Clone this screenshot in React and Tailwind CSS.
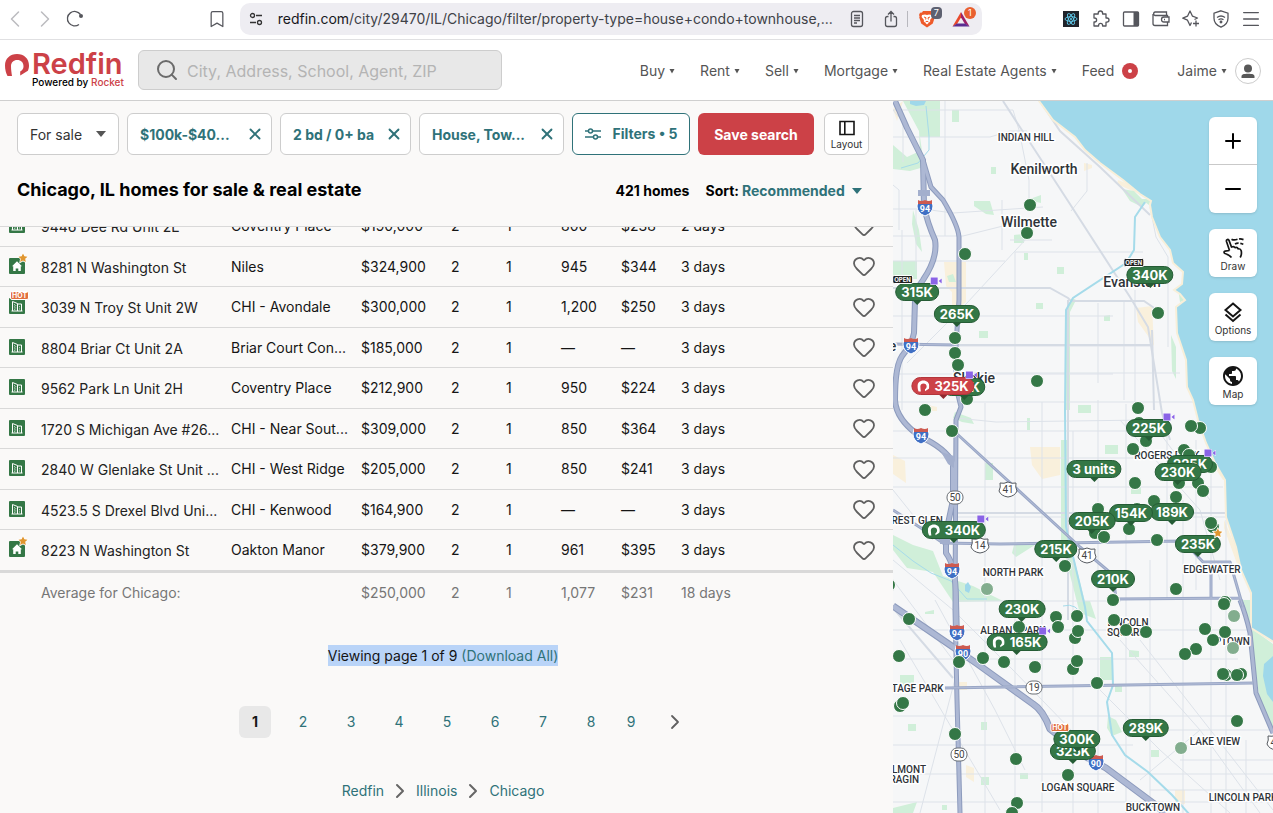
import React from "react";
import {
  ChevronLeft, ChevronRight, Bookmark, Search, X, Heart, Plus, Minus, Menu,
} from "lucide-react";

const ROWS = [
  { kind: "condo", address: "9446 Dee Rd Unit 2E", area: "Coventry Place", price: "$190,000", beds: "2", baths: "1", sqft: "800", rate: "$238", days: "2 days" },
  { kind: "house", badge: "star", address: "8281 N Washington St", area: "Niles", price: "$324,900", beds: "2", baths: "1", sqft: "945", rate: "$344", days: "3 days" },
  { kind: "condo", badge: "hot", address: "3039 N Troy St Unit 2W", area: "CHI - Avondale", price: "$300,000", beds: "2", baths: "1", sqft: "1,200", rate: "$250", days: "3 days" },
  { kind: "condo", address: "8804 Briar Ct Unit 2A", area: "Briar Court Con...", price: "$185,000", beds: "2", baths: "1", sqft: "—", rate: "—", days: "3 days" },
  { kind: "condo", address: "9562 Park Ln Unit 2H", area: "Coventry Place", price: "$212,900", beds: "2", baths: "1", sqft: "950", rate: "$224", days: "3 days" },
  { kind: "condo", address: "1720 S Michigan Ave #26...", area: "CHI - Near Sout...", price: "$309,000", beds: "2", baths: "1", sqft: "850", rate: "$364", days: "3 days" },
  { kind: "condo", address: "2840 W Glenlake St Unit ...", area: "CHI - West Ridge", price: "$205,000", beds: "2", baths: "1", sqft: "850", rate: "$241", days: "3 days" },
  { kind: "condo", address: "4523.5 S Drexel Blvd Uni...", area: "CHI - Kenwood", price: "$164,900", beds: "2", baths: "1", sqft: "—", rate: "—", days: "3 days" },
  { kind: "house", badge: "star", address: "8223 N Washington St", area: "Oakton Manor", price: "$379,900", beds: "2", baths: "1", sqft: "961", rate: "$395", days: "3 days" },
];

/* Map canvas coordinates: x runs 893–1273, y runs 101–813. */
const ORIGIN_X = 893;
const ORIGIN_Y = 101;

const DOTS = [
  [1030, 205], [1027, 233], [965, 254], [1158, 313], [955, 338], [955, 353], [958, 365], [1037, 381],
  [967, 399], [1138, 408], [925, 410], [952, 431], [1200, 428], [1191, 426], [1139, 423], [1146, 441],
  [1133, 449], [1184, 450], [1189, 455], [1211, 467], [1135, 483], [1179, 483], [1198, 483], [1203, 491],
  [1176, 497], [1154, 501], [1098, 509], [1137, 509], [1129, 529], [1095, 533], [1104, 537], [1157, 540],
  [1213, 527], [1211, 523], [1065, 566], [1176, 589], [889, 585], [1113, 600], [1225, 602], [1224, 604],
  [909, 619], [1056, 617], [1077, 616], [1019, 627], [1058, 627], [1075, 638], [1078, 631], [1114, 620],
  [1126, 630], [1146, 632], [1205, 629], [1225, 632], [1213, 640], [1196, 649], [1185, 654], [899, 656],
  [983, 658], [959, 662], [1004, 662], [1035, 667], [1073, 669], [1077, 661], [1097, 683], [1226, 675],
  [1223, 674], [1241, 674], [1237, 675], [900, 706], [903, 703], [955, 734], [1237, 721], [1016, 759],
  [1068, 775], [1017, 803], [1012, 813],
];
const SEEN_DOTS = [[987, 589], [1234, 616], [1233, 648], [1181, 748]];

const PINS = [
  { x: 1150, y: 275, label: "340K", tag: "open" },
  { x: 917, y: 292, label: "315K", tag: "open-video" },
  { x: 957, y: 314, label: "265K" },
  { x: 964, y: 387, label: "215K" },
  { x: 943, y: 386, label: "325K", logo: true, red: true, tag: "video" },
  { x: 1149, y: 428, label: "225K", tag: "video" },
  { x: 1094, y: 469, label: "3 units" },
  { x: 1190, y: 464, label: "225K", tag: "video" },
  { x: 1178, y: 472, label: "230K" },
  { x: 1172, y: 512, label: "189K" },
  { x: 1131, y: 513, label: "154K" },
  { x: 1092, y: 521, label: "205K" },
  { x: 1198, y: 544, label: "235K", tag: "star" },
  { x: 1056, y: 549, label: "215K" },
  { x: 954, y: 530, label: "340K", logo: true, tag: "video" },
  { x: 1113, y: 579, label: "210K" },
  { x: 1022, y: 609, label: "230K" },
  { x: 1017, y: 642, label: "165K", logo: true, tag: "video" },
  { x: 1146, y: 728, label: "289K" },
  { x: 1073, y: 751, label: "325K" },
  { x: 1077, y: 739, label: "300K", tag: "hot" },
];

const TOWNS = [
  [1044, 174, "Kenilworth"], [1029, 227, "Wilmette"], [1132, 287, "Evanston"], [974, 383, "Skokie"], [873, 351, "Glenvie"],
];
const AREAS = [
  [1026, 141, "INDIAN HILL"], [1167, 459, "ROGERS PARK"], [1013, 576, "NORTH PARK"], [911, 524, "FOREST GLEN"],
  [1212, 573, "EDGEWATER"], [1013, 634, "ALBANY PARK"], [1128, 626, "LINCOLN"], [1126, 636, "SQUARE"],
  [1229, 645, "UPTOWN"], [908, 692, "PORTAGE PARK"], [1215, 745, "LAKE VIEW"], [1078, 791, "LOGAN SQUARE"],
  [1153, 811, "BUCKTOWN"], [1243, 801, "LINCOLN PARK"], [903, 773, "BELMONT"], [901, 783, "CRAGIN"],
];
const INTERSTATES = [[925, 208, "94"], [911, 346, "94"], [921, 436, "94"], [952, 571, "94"], [957, 633, "94"], [963, 653, "90"], [1096, 763, "90"]];
const US_ROUTES = [[1008, 489, "41"], [1087, 555, "41"], [980, 545, "14"], [1276, 742, "41"]];
const STATE_ROUTES = [[955, 497, "50"], [959, 754, "50"], [1034, 687, "19"]];

const GREENS = [
  "M903 101h27v36h-10l2 14 2 16-14 4-17-2v-24l14 12 13-6-1-20z",
  "M930 101h10v36h-18v-36zM952 110h7v12h-7zM991 167h5v7h-5zM947 276l6-2 3 8h-7zM974 201h16l4 14-8-1-12-8z",
  "M893 261h24v18h-24zM913 210l6 20 3 22-6-8-4-20zM1014 235l10-1v9h-10zM1057 267h7v7h-7zM1024 253h4v7h-4z",
  "M979 331h9v7h-9zM1036 303h7v6h-7zM1104 316l6-1v6h-6zM1027 200l14-5v8z",
  "M1066 310l6-12 4 2-6 12v98h-4zM1122 189l12 2 12 12-4 4-12-6z",
  "M955 412l16 6 3 6-12-2-9-4zM1027 418h3v12h-3zM1078 405h13v8h-13zM1105 445h13v9h-13zM985 463h8v17h-8zM1061 440h8l-2 90 20 80h-8l-18-70z",
  "M893 535l20 10 20 6 10 25 30 10 30 15-50 1-20-30-26-4-14-18zM1131 485h10v9h-10zM1014 545l24-2-22 14-4-4z",
  "M900 675h14v12h-14zM1100 657h12v23h-12zM1129 650l10 1v6h-10zM1108 716l8 4 6 12-10 4-5-8zM1115 685h7v7h-7zM981 722h6v8h-6zM1151 750h8v7h-8zM981 777h8v8h-8zM1020 773h8v6h-8zM908 724h8v7h-8zM942 805h5v5h-5z",
  "M1240 600h11v28l22 16v90l-12-28-6-36-4-34z",
  "M1078 601h12l6 18-16-6zM893 808l24-6-4 11h-20zM925 612l9-2v4h-9z",
  "M1149 205l-8-6 10 0zM1171 335l5 12v32l-4-8zM1178 288l8 0 0 12-6 2z",
];
const SANDS = [
  "M944 262h22v40l-14 12v-22l-6-6zM1030 447l30 0v28l-18 4-10-14zM1136 308l16-2 2 40-6-10-10-14z",
  "M1084 163l8 2 0 3-8 3zM1118 180l16 6 17 15-14-8-20-9zM903 101l-10 8 4 12zM893 455l12 6 1 22-13-9zM958 682h9v8h-9zM966 765l8 3v14l-8-5zM1175 790h10v14h-10zM928 405l9 2v4h-8z",
  "M1200 420l10 24 12 28 5 8-4 0-8-12zM1224 520l12 28 8 24-4 0-16-44z",
];
const MINOR_ROADS = [
  "M893 137h97l20-6h17M893 209h30l30 4 90-6M893 236h70l40-10M893 261h112M893 316h220M956 346h196M893 374h220",
  "M970 373h210M893 402h300M956 418l40 4 150-2M893 431h270M893 458h300M893 487h330M956 517h270M956 601h165M893 630h360M893 659h345M893 716h340M893 745h240M893 774h380M893 802h380M1130 730h143M1180 760h93M1150 790h123",
  "M945 101v135M916 210v60M902 230v180M1002 200v50M1098 303v80M1124 300v100M1135 290v120M1015 252v560M1042 402v410M985 403v410M1073 431v382M1098 400v413M1126 404v409M1150 560v253M1167 430v170M1183 500v313M1196 440v150M1211 470v343M1226 520v293M1246 740v73",
  "M893 110h120l6 20 10 50v25M1052 240l-42 0M1027 238l-60 65-60 60M1015 252h128",
  "M1087 163v28l-16 20M893 185l6 5v40M893 110l10 12v40M1150 207l6 30 12 20v90",
  "M893 560l60 50 60 60 90 93 60 50M893 580l60 80M935 600l60 110 30 60M1120 640l80 90 60 83M1100 690l60 60 70 63M1140 640l133 170M1120 420l80 90 20 70M1150 420l60 80M893 490l40 50M960 660l-40 153M1140 780l60-50M900 640l100 170",
];
const WIDE_ROADS = [
  "M1003 101l65 100 62 96 18 30 14 86 8 27M893 288h157l18 10 3 3h73l16 11",
  "M1068 300v320M893 608l60 70M1152 330l2 80M1040 101l20 30 40 36 50 48",
  "M1226 513h-270M956 345h196",
];
const ARTERIAL_ROADS = "M893 344L956 345M956 433L1080 547 1113 575 1116 599 1240 598M893 510L921 528 943 543 1000 544 1183 541 1203 562 1230 562 1243 607M1211 562V598M945 688L1253 683";

function Interstate({ x, y, label }) {
  return (
    <g>
      <path d={`M${x - 7} ${y - 7}q3 2 7 0q4 2 7 0l1 5q0 7-8 10q-8-3-8-10z`} fill="#3f6fc4" stroke="#fff" strokeWidth="1" />
      <path d={`M${x - 7} ${y - 8}q3 2 7 0q4 2 7 0v4h-14z`} fill="#cd5a50" />
      <text x={x} y={y + 4} textAnchor="middle" fontSize="9" fontWeight="700" fill="#fff">{label}</text>
    </g>
  );
}

function MapArtwork() {
  return (
    <svg className="block h-[712px] w-[380px]" viewBox="893 101 380 712" fontFamily="Roboto, sans-serif" role="img" aria-label="Map of Chicago's north side">
      <rect x="893" y="101" width="380" height="712" fill="#f6f7f8" />
      {SANDS.map((d) => <path key={d} d={d} fill="#f9f0dc" />)}
      {GREENS.map((d) => <path key={d} d={d} fill="#d0efd9" />)}
      {MINOR_ROADS.map((d) => <path key={d} d={d} fill="none" stroke="#dde2e9" strokeWidth="1" />)}
      {WIDE_ROADS.map((d) => <path key={d} d={d} fill="none" stroke="#d5dbe4" strokeWidth="2" />)}
      <path d="M1039 95L1039 101 1053 120 1075 137 1085 150 1100 163 1123 180 1140 194 1151 201 1150 205 1152 217 1160 237 1170 250 1173 263 1183 272 1182 284 1174 290 1180 294 1185 300 1176 307 1177 333 1186 360 1187 387 1193 400 1198 420 1206 443 1215 463 1225 480 1226 517 1236 547 1241 570 1251 593 1251 628 1280 646V95z" fill="#9fd8ea" stroke="#f8efd9" strokeWidth="2" />
      <path d="M1264 664l9-8v46l-6-8-4-18zM910 101h16l-2 4-8 1-6-2zM968 582l3 5-2 6-4-2v-6z" fill="#9fd8ea" />
      <path d="M1145 202l-10 15-1 33-8 13-53 35-7 12-1 100 1 117 19 80 2 14 25 32 1 32-6 17 5 33 13 20 23 17 24 23 18 20" fill="none" stroke="#a5dbea" strokeWidth="2" />
      <path d="M926 106l3 30 0 14-11 13-17 5M893 545l20 16 18 12 20 8 16 18 20 0M1063 606q14-4 20 12" fill="none" stroke="#a5dbea" strokeWidth="1" />
      <g fill="none" strokeLinejoin="round">
        <g stroke="#8d9bbd" strokeWidth="6">
          <path d="M895 101L907 128 923 160 924 206Q927 222 935 240Q938 258 923 280Q915 290 915 300L914 333Q912 344 902 356Q895 366 895 400Q896 420 921 437Q945 448 953 463L953 500 946 533 946 553Q956 566 956 600L957 640" />
          <path d="M923 160L931 187 943 200Q958 225 959 237L959 300 956 345 956 387 961 407 956 420 955 610 957 700 960 813" strokeWidth="5" />
          <path d="M893 606L953 647 976 663 1033 704Q1043 710 1050 729L1086 757 1106 768 1153 803 1165 813" strokeWidth="7" />
          <path d="M1240 600Q1246 615 1250 633L1256 693 1273 733" strokeWidth="5" />
        </g>
        <g stroke="#adb8d4" strokeWidth="4">
          <path d="M895 101L907 128 923 160 924 206Q927 222 935 240Q938 258 923 280Q915 290 915 300L914 333Q912 344 902 356Q895 366 895 400Q896 420 921 437Q945 448 953 463L953 500 946 533 946 553Q956 566 956 600L957 640" />
          <path d="M923 160L931 187 943 200Q958 225 959 237L959 300 956 345 956 387 961 407 956 420 955 610 957 700 960 813" strokeWidth="3" />
          <path d="M893 606L953 647 976 663 1033 704Q1043 710 1050 729L1086 757 1106 768 1153 803 1165 813" strokeWidth="5" />
          <path d="M1240 600Q1246 615 1250 633L1256 693 1273 733" strokeWidth="3" />
        </g>
        <path d={ARTERIAL_ROADS} stroke="#9aa7c6" strokeWidth="3" />
        <path d={ARTERIAL_ROADS} stroke="#b3bdd7" strokeWidth="1" />
      </g>
      <path d="M918 190h12v6h-12zM941 452l13 4v12l-6-4zM940 538l10-2v8h-10z" fill="#a3afcd" />
      {US_ROUTES.map(([x, y, label]) => (
        <g key={`${x}-${y}`}>
          <path d={`M${x - 8} ${y - 6}q4 1 8-1q4 2 8 1q-1 4 1 8q-2 5-9 6q-7-1-9-6q2-4 1-8z`} fill="#fff" stroke="#555a60" strokeWidth="1" />
          <text x={x} y={y + 4} textAnchor="middle" fontSize="10" fill="#444">{label}</text>
        </g>
      ))}
      {STATE_ROUTES.map(([x, y, label]) => (
        <g key={`${x}-${y}`}>
          <rect x={x - 8} y={y - 6} width="16" height="13" rx="6" fill="#fff" stroke="#6b7076" strokeWidth="1" />
          <text x={x} y={y + 4} textAnchor="middle" fontSize="10" fill="#444">{label}</text>
        </g>
      ))}
      {INTERSTATES.map(([x, y, label]) => <Interstate key={`${x}-${y}`} x={x} y={y} label={label} />)}
      <g textAnchor="middle" fill="#2f3338" stroke="#fff" strokeWidth="3" paintOrder="stroke" strokeLinejoin="round" fontWeight="500">
        {TOWNS.map(([x, y, label]) => <text key={label} x={x} y={y} fontSize="14">{label}</text>)}
        {AREAS.map(([x, y, label]) => <text key={label} x={x} y={y} fontSize="10">{label}</text>)}
      </g>
    </svg>
  );
}

function RedfinMark({ className }) {
  return (
    <svg className={className} viewBox="0 0 24 24" fill="currentColor" aria-hidden="true">
      <path d="M7 23H2.500C1 20 0 16.500 0 12.500 0 5.500 5 1 12 1s12 4.500 12 11.500c0 2-.4 3.800-1.100 5.200L15.200 22.500v-4c2.300-1.200 3.300-3 3.300-5.300C18.500 9.500 16 7 12.300 7 8.500 7 6 9.500 6 13.200c0 3.600.6 6.800 1 9.800z" />
    </svg>
  );
}

function StarBadge() {
  return (
    <svg className="size-3" viewBox="0 0 12 12" aria-hidden="true">
      <path d="M6 1.500l1.400 2.800 3.100.4-2.300 2.100.6 3.200L6 8.500l-2.800 1.500.6-3.200L1.500 4.700l3.100-.4z" fill="#e0962f" stroke="#fff" strokeWidth="1.500" paintOrder="stroke" />
    </svg>
  );
}

function VideoBadge() {
  return (
    <svg className="h-2 w-3" viewBox="0 0 12 8" aria-hidden="true">
      <path d="M.5.500h7v7h-7zM8.500 4L11.500 1.500v5z" fill="#8a63e6" stroke="#fff" strokeWidth="1" paintOrder="stroke" />
    </svg>
  );
}

function HotBadge() {
  return <span className="block rounded-xs border border-white bg-[#e2703f] px-px text-[7px] leading-[7px] font-bold text-white">HOT</span>;
}

function OpenBadge() {
  return <span className="block rounded-xs border border-white bg-[#222] px-px text-[6px] leading-[7px] font-bold text-white">OPEN</span>;
}

function Pin({ pin }) {
  const tone = pin.red ? "border-[#b3353b] bg-[#cc4147]" : "border-[#255c35] bg-[#347746]";
  return (
    <button
      type="button"
      className="absolute -translate-x-1/2 -translate-y-1/2"
      style={{ left: pin.x - ORIGIN_X, top: pin.y - ORIGIN_Y }}
    >
      <span className={`relative z-10 flex h-[18px] items-center gap-1 rounded-full border px-[5px] text-[13px] leading-4 font-bold whitespace-nowrap text-white ${tone}`}>
        {pin.logo && <RedfinMark className="mr-px size-3" />}
        {pin.label}
      </span>
      <svg className="absolute top-full left-1/2 -mt-px h-[5px] w-[10px] -translate-x-1/2" viewBox="0 0 10 5" aria-hidden="true">
        <path d="M0 0h10L5 5z" fill={pin.red ? "#8f2a30" : "#255c35"} />
      </svg>
      {(pin.tag === "open" || pin.tag === "open-video") && <span className="absolute -top-2 -left-[3px] z-20"><OpenBadge /></span>}
      {(pin.tag === "video" || pin.tag === "open-video") && <span className="absolute -top-[6px] -right-[3px] z-20 flex"><VideoBadge /></span>}
      {pin.tag === "hot" && <span className="absolute -top-[7px] -left-[3px] z-20"><HotBadge /></span>}
      {pin.tag === "star" && <span className="absolute -top-2 -right-[3px] z-20"><StarBadge /></span>}
    </button>
  );
}

function MapControl({ label, children }) {
  return (
    <button type="button" className="flex size-12 flex-col items-center justify-center rounded-md bg-white pt-px text-[#151515] shadow-sm">
      {children}
      <span className="text-[10px] leading-3 text-[#333]">{label}</span>
    </button>
  );
}

function MapPane() {
  return (
    <section aria-label="Map" className="relative w-[380px] shrink-0 overflow-hidden bg-[#f6f7f8]">
      <MapArtwork />
      {DOTS.map(([x, y]) => (
        <span key={`${x}-${y}`} className="absolute size-[14px] -translate-x-1/2 -translate-y-1/2 rounded-full border border-white bg-[#347746]" style={{ left: x - ORIGIN_X, top: y - ORIGIN_Y }} />
      ))}
      {SEEN_DOTS.map(([x, y]) => (
        <span key={`${x}-${y}`} className="absolute size-[14px] -translate-x-1/2 -translate-y-1/2 rounded-full border border-white bg-[#82ad8e]" style={{ left: x - ORIGIN_X, top: y - ORIGIN_Y }} />
      ))}
      {PINS.map((pin) => <Pin key={`${pin.x}-${pin.y}`} pin={pin} />)}
      <div className="absolute top-4 right-4 z-30 flex flex-col gap-4">
        <div className="flex flex-col overflow-hidden rounded-md bg-white shadow-sm">
          <button type="button" aria-label="Zoom in" className="flex size-12 items-center justify-center border-b border-[#c9c9c9]"><Plus size={24} /></button>
          <button type="button" aria-label="Zoom out" className="flex size-12 items-center justify-center"><Minus size={24} /></button>
        </div>
        <MapControl label="Draw">
          <svg className="size-6" viewBox="0 0 24 24" fill="none" stroke="currentColor" strokeWidth="1.700" strokeLinejoin="round" aria-hidden="true">
            <path d="M8.500 14.500L5.500 5.500c-.6-2 1.900-2.800 2.600-.9L10.500 11c1.500-.7 3-.3 3.500.7 1.400-.5 2.700 0 3.200 1.100 1.500-.2 2.600.5 3 2 .6 2.600.2 4.600-1 6.700M8.500 14.500l-4.500.6c-1.400.3-1.200 1.900 0 2.400C7 18.500 9 19.500 10.500 21.500" />
            <path d="M10.500 3.200c2 1.200 4 .8 6 .1M18 3c1.800-.2 3.200.1 4.500.6M14 8c1.200-.7 2.400-1 3.600-.9M19.300 7.300c1.200.2 2.200.6 3 1.100" />
          </svg>
        </MapControl>
        <MapControl label="Options">
          <svg className="size-6" viewBox="0 0 24 24" fill="none" stroke="currentColor" strokeWidth="2" aria-hidden="true">
            <path d="M12 3.500l7.500 6.500-7.500 6.500L4.500 10zM4.500 14.500l7.500 6.500 7.500-6.500" />
          </svg>
        </MapControl>
        <MapControl label="Map">
          <svg className="size-6" viewBox="0 0 24 24" fill="currentColor" aria-hidden="true">
            <path d="M12 2C6.480 2 2 6.480 2 12s4.480 10 10 10 10-4.480 10-10S17.520 2 12 2zm-1 17.930c-3.950-.49-7-3.850-7-7.930 0-.62.080-1.210.210-1.790L9 15v1c0 1.100.9 2 2 2v1.930zm6.900-2.540c-.26-.81-1-1.390-1.900-1.390h-1v-3c0-.55-.45-1-1-1H8v-2h2c.55 0 1-.45 1-1V7h2c1.100 0 2-.9 2-2v-.41c2.930 1.190 5 4.060 5 7.410 0 2.080-.8 3.970-2.100 5.390z" />
          </svg>
        </MapControl>
      </div>
    </section>
  );
}

function BrowserBar() {
  return (
    <div className="flex h-10 shrink-0 items-center border-b border-[#e0e0e2] bg-white pr-[7px] pb-px pl-1 text-[#55565c]">
      <button type="button" aria-label="Back" className="flex w-[22px] justify-center text-[#bcbcc0]"><ChevronLeft size={28} strokeWidth={1.300} className="shrink-0" /></button>
      <button type="button" aria-label="Forward" className="ml-2 flex w-[22px] justify-center text-[#bcbcc0]"><ChevronRight size={28} strokeWidth={1.300} className="shrink-0" /></button>
      <button type="button" aria-label="Reload" className="ml-2 flex w-[22px] justify-center">
        <svg className="size-5" viewBox="0 0 20 20" fill="none" stroke="currentColor" strokeWidth="1.300" aria-hidden="true">
          <path d="M14 15.400A7.200 7.200 0 1 1 15.500 5.500" />
          <circle cx="16" cy="7" r="2" fill="currentColor" stroke="none" />
        </svg>
      </button>
      <div className="flex-8" />
      <button type="button" aria-label="Bookmark" className="flex w-6 justify-center"><Bookmark size={20} strokeWidth={1.500} /></button>
      <div className="ml-[11px] flex h-8 min-w-0 basis-[742px] items-center rounded-[10px] bg-[#eeedf2] px-2">
        <svg className="mx-px size-[14px] shrink-0 text-[#333]" viewBox="0 0 14 14" fill="none" stroke="currentColor" strokeWidth="1.300" aria-hidden="true">
          <circle cx="3.500" cy="3.500" r="2" /><path d="M7 3.500h6M1 10.500h6" /><circle cx="10.500" cy="10.500" r="2" />
        </svg>
        <span className="ml-[14px] min-w-0 flex-1 truncate text-sm leading-5 text-[#404248]"><span className="text-[#17181c]">redfin.com</span>/city/29470/IL/Chicago/filter/property-type=house+condo+townhouse,...</span>
        <button type="button" aria-label="Reader view" className="flex w-6 justify-center">
          <svg className="size-[18px]" viewBox="0 0 18 18" fill="none" stroke="currentColor" strokeWidth="1.300" aria-hidden="true">
            <rect x="3.500" y="1.500" width="11" height="15" rx="2" /><path d="M6 5.500h6M6 8h6M6 10.500h6M6 13h3" />
          </svg>
        </button>
        <button type="button" aria-label="Share" className="ml-[10px] flex w-6 justify-center">
          <svg className="size-[18px]" viewBox="0 0 18 18" fill="none" stroke="currentColor" strokeWidth="1.300" aria-hidden="true">
            <path d="M6.500 6.500h-1a2 2 0 0 0-2 2v6a2 2 0 0 0 2 2h7a2 2 0 0 0 2-2v-6a2 2 0 0 0-2-2h-1M9 11.500V2M6 4.500l3-3 3 3" />
          </svg>
        </button>
        <span className="mx-1 h-4 w-px bg-[#b8b8be]" />
        <button type="button" aria-label="Brave Shields" className="relative ml-[3px] flex w-6 justify-center">
          <svg className="size-[18px]" viewBox="0 0 18 18" aria-hidden="true">
            <path d="M5 1h8l1 1.500 2 .3 1 2.200-.6 1.200.4 1-2 6.300L9 17.500l-5.800-4L1.200 7.200l.4-1L1 5l1-2.200 2-.3z" fill="#ee5a2a" />
            <path d="M4 5l3-.6 2 .6 2-.6L14 5l.4 2-2.400 3 .3 1.300L9 14.500l-3.300-3.200L6 10 3.600 7z" fill="#fff" />
            <path d="M6 7l2 .8-.4 1.700M12 7l-2 .8.400 1.700M7.500 12L9 11.200l1.500.8" stroke="#ee5a2a" fill="none" />
          </svg>
          <span className="absolute -top-[3px] -right-[3px] rounded bg-[#5d6070] px-[3px] text-[9px] leading-3 text-white">7</span>
        </button>
        <button type="button" aria-label="Brave Rewards" className="relative mr-px ml-[10px] flex w-6 justify-center">
          <svg className="size-[18px]" viewBox="0 0 18 18" aria-hidden="true">
            <path d="M9 2L.5 16.500 5 14l4-6.500z" fill="#e8492c" /><path d="M9 2l8.500 14.500L13 14 9 7.500z" fill="#9c2068" /><path d="M.5 16.500h17L13 13.500H5z" fill="#5a2d91" />
          </svg>
          <span className="absolute -top-[3px] -right-[3px] rounded-full bg-[#e9602f] px-1 text-[9px] leading-3 text-white">1</span>
        </button>
      </div>
      <div className="flex-5" />
      <div className="flex items-center">
        <button type="button" aria-label="React Developer Tools" className="flex w-[30px] justify-center">
          <svg className="size-4" viewBox="0 0 16 16" fill="none" stroke="#62d0f2" aria-hidden="true">
            <rect width="16" height="16" fill="#20232a" stroke="none" />
            <g strokeWidth=".9"><ellipse cx="8" cy="8" rx="6" ry="2.300" /><ellipse cx="8" cy="8" rx="6" ry="2.300" transform="rotate(60 8 8)" /><ellipse cx="8" cy="8" rx="6" ry="2.300" transform="rotate(120 8 8)" /></g>
            <circle cx="8" cy="8" r="1" fill="#62d0f2" stroke="none" />
          </svg>
        </button>
        <button type="button" aria-label="Extensions" className="flex w-[30px] justify-center">
          <svg className="size-[18px]" viewBox="0 0 18 18" fill="none" stroke="currentColor" strokeWidth="1.300" strokeLinejoin="round" aria-hidden="true">
            <path d="M2 4h4.200V3.200a2.200 2.200 0 0 1 4.400 0V4H14v4h.9a2.100 2.100 0 0 1 0 4.200H14V16h-3.400v-.6a2 2 0 0 0-4 0v.6H2v-4h.6a2 2 0 0 0 0-4H2z" />
          </svg>
        </button>
        <button type="button" aria-label="Sidebar" className="flex w-[30px] justify-center">
          <svg className="h-4 w-[18px]" viewBox="0 0 18 16" aria-hidden="true"><rect x="1.500" y="1" width="15" height="14" rx="1" fill="none" stroke="currentColor" strokeWidth="1.300" /><path d="M11.500 1h5v14h-5z" fill="currentColor" /></svg>
        </button>
        <button type="button" aria-label="Wallet" className="flex w-[30px] justify-center">
          <svg className="h-4 w-[18px]" viewBox="0 0 18 16" fill="none" stroke="currentColor" strokeWidth="1.300" aria-hidden="true">
            <path d="M15.500 6V4.500H3A1.800 1.800 0 0 1 3 1h11.500v3.500M1 3v9.500a2 2 0 0 0 2 2h12.500V11" /><path d="M17 6h-5a2.500 2.500 0 0 0 0 5h5zM12 8.500h1" />
          </svg>
        </button>
        <button type="button" aria-label="Leo AI" className="flex w-[30px] justify-center">
          <svg className="size-[18px]" viewBox="0 0 18 18" fill="none" stroke="currentColor" strokeWidth="1.300" strokeLinejoin="round" aria-hidden="true">
            <path d="M12.500 9.500L15.500 8 10.500 6.200 8 1 5.500 6.200.8 8.200l4.700 2L8 15.500l1.500-3M14 10.500v6M11 13.500h6" />
          </svg>
        </button>
        <button type="button" aria-label="VPN" className="flex w-[30px] justify-center">
          <svg className="size-[18px]" viewBox="0 0 18 18" fill="none" stroke="currentColor" strokeWidth="1.300" aria-hidden="true">
            <path d="M9 .8l7 2.400v5c0 4.500-3 7.300-7 9-4-1.700-7-4.500-7-9v-5z" /><path d="M5 7.500q4-3 8 0M6.500 9.800q2.500-1.800 5 0" /><circle cx="9" cy="12" r=".8" fill="currentColor" />
          </svg>
        </button>
        <button type="button" aria-label="Menu" className="flex w-[30px] justify-center"><Menu size={22} strokeWidth={1.500} className="shrink-0" /></button>
      </div>
    </div>
  );
}

function NavMenu({ children }) {
  return (
    <button type="button" className="flex items-center gap-1 whitespace-nowrap">
      {children}
      <svg className="size-[6px]" viewBox="0 0 6 6" aria-hidden="true"><path d="M.5 1h5L3 5.500z" fill="#555" /></svg>
    </button>
  );
}

function SiteHeader() {
  return (
    <header className="flex h-[61px] shrink-0 items-center border-b border-[#cfcfcf] bg-white pr-3 pl-[5px]">
      <a href="#home" aria-label="Redfin" className="flex w-[118px] items-start">
        <RedfinMark className="mt-px size-6 shrink-0 text-[#cc4147]" />
        <span className="ml-[3px] flex flex-col">
          <span className="text-[29px] leading-6 font-semibold text-[#cc4147]">Redfin</span>
          <span className="text-[10px] leading-3 font-medium whitespace-nowrap text-black">Powered by <span className="text-[#cc4147]">Rocket</span></span>
        </span>
      </a>
      <label className="ml-[15px] flex h-10 min-w-0 basis-[364px] items-center gap-2 rounded-md border border-[#cdcdcd] bg-[#e8e8e8] px-4">
        <Search size={24} strokeWidth={2} className="shrink-0 text-[#6b6b6b]" />
        <span className="sr-only">Search</span>
        <input type="text" placeholder="City, Address, School, Agent, ZIP" className="min-w-0 flex-1 bg-transparent pt-0.5 text-base outline-none placeholder:text-[#b4b4b4]" />
      </label>
      <nav className="ml-auto flex items-center gap-[25px] pt-0.5 text-sm text-[#555]">
        <NavMenu>Buy</NavMenu>
        <NavMenu>Rent</NavMenu>
        <NavMenu>Sell</NavMenu>
        <NavMenu>Mortgage</NavMenu>
        <NavMenu>Real Estate Agents</NavMenu>
        <a href="#feed" className="flex items-center gap-2">Feed
          <span className="flex size-4 items-center justify-center rounded-full bg-[#cc4147]"><span className="size-1 rounded-full bg-white" /></span>
        </a>
        <div className="ml-[14px] flex items-center gap-2">
          <NavMenu>Jaime</NavMenu>
          <span className="flex size-[26px] items-center justify-center rounded-full border border-[#ccc]">
            <svg className="size-4" viewBox="0 0 16 16" fill="#585858" aria-hidden="true"><circle cx="8" cy="5.500" r="4" /><path d="M1.500 15v-1.500c0-2 2-2.700 6.500-2.700s6.500.7 6.500 2.700V15z" /></svg>
          </span>
        </div>
      </nav>
    </header>
  );
}

function FilterChip({ width, children }) {
  return (
    <button type="button" className={`flex h-[42px] shrink-0 items-center justify-between rounded-md border border-[#cdcdcd] bg-white pr-[7px] pl-3 text-sm font-bold whitespace-nowrap text-[#2f7279] ${width}`}>
      <span className="pt-0.5">{children}</span>
      <X size={18} strokeWidth={2.500} className="shrink-0" />
    </button>
  );
}

function Filters() {
  return (
    <div className="flex items-center gap-2">
      <label className="relative flex h-[42px] w-[102px] items-center rounded-md border border-[#cdcdcd] bg-white">
        <span className="sr-only">Listing type</span>
        <select className="h-full w-full appearance-none bg-transparent pt-0.5 pl-3 text-sm text-[#333] outline-none"><option>For sale</option></select>
        <svg className="pointer-events-none absolute right-3 h-[6px] w-[10px]" viewBox="0 0 10 6" aria-hidden="true"><path d="M0 0h10L5 6z" fill="#555" /></svg>
      </label>
      <FilterChip width="w-[145px]">$100k-$40...</FilterChip>
      <FilterChip width="w-[131px]">2 bd / 0+ ba</FilterChip>
      <FilterChip width="w-[145px]">House, Tow...</FilterChip>
      <button type="button" className="flex h-[42px] w-[118px] shrink-0 items-center justify-center gap-[10px] rounded-md border border-[#2f7279] bg-white text-sm font-bold whitespace-nowrap text-[#2f7279]">
        <svg className="h-[14px] w-[18px]" viewBox="0 0 18 14" fill="none" stroke="currentColor" strokeWidth="1.500" aria-hidden="true">
          <path d="M1 4h3.500M8.500 4H17M1 10h8.500M13.500 10H17" /><circle cx="6.500" cy="4" r="2" /><circle cx="11.500" cy="10" r="2" />
        </svg>
        Filters • 5
      </button>
      <button type="button" className="h-[42px] w-[116px] shrink-0 rounded-md bg-[#cc4147] pt-0.5 text-sm font-bold whitespace-nowrap text-white">Save search</button>
      <button type="button" className="ml-[2px] flex h-[42px] w-[45px] shrink-0 flex-col items-center justify-center rounded-md border border-[#cdcdcd] bg-white text-[10px] leading-[13px] text-[#333]">
        <svg className="my-px h-[18px] w-[18px]" viewBox="0 0 18 18" fill="none" stroke="#151515" strokeWidth="1.600" aria-hidden="true"><path d="M2 2.500h14v13H2zM6.800 2.500v13" /></svg>
        Layout
      </button>
    </div>
  );
}

function ListingIcon({ kind, badge }) {
  return (
    <span className="relative block size-4">
      {kind === "condo" ? (
        <svg className="size-4" viewBox="0 0 16 16" aria-hidden="true">
          <rect width="16" height="16" rx="1" fill="#347746" />
          <path d="M3.500 13V3.500l5 2V13M8.500 6h4v7M2.500 13h11" fill="none" stroke="#fff" strokeWidth="1" />
          <path d="M5.500 6v6M6.800 7v5M10.500 8v4" stroke="#cfe3d4" strokeWidth=".8" strokeDasharray="1 .7" />
        </svg>
      ) : (
        <svg className="size-4" viewBox="0 0 16 16" aria-hidden="true">
          <rect width="16" height="16" rx="1" fill="#347746" />
          <path d="M8 3.300l5 4.900h-1.200V13H9.300v-2.500H6.700V13H4.200V8.200H3z" fill="#fff" />
        </svg>
      )}
      {badge === "star" && <span className="absolute -top-[6px] -right-1"><StarBadge /></span>}
      {badge === "hot" && <span className="absolute -top-[7px] left-px"><HotBadge /></span>}
    </span>
  );
}

function ListingTable() {
  return (
    <table className="w-full table-fixed border-separate border-spacing-0 text-sm text-[#151515]">
      <colgroup>
        <col className="w-[41px]" /><col className="w-[190px]" /><col className="w-[130px]" /><col className="w-[90px]" />
        <col className="w-[55px]" /><col className="w-[55px]" /><col className="w-[60px]" /><col className="w-[60px]" />
        <col /><col className="w-[41px]" />
      </colgroup>
      <tbody>
        {ROWS.map((row, index) => {
          const last = index === ROWS.length - 1;
          const height = last ? "h-[43px] *:border-b-3" : index % 2 === 0 ? "h-[41px] *:border-b" : "h-10 *:border-b";
          return (
            <tr key={row.address} className={`*:border-[#d9d9d9] ${height}`}>
              <td className="pb-0.5 pl-[9px]"><ListingIcon kind={row.kind} badge={row.badge} /></td>
              <td className="pt-0.5 whitespace-nowrap"><a href="#listing" className="text-[#222]">{row.address}</a></td>
              <td className="whitespace-nowrap">{row.area}</td>
              <td>{row.price}</td>
              <td>{row.beds}</td>
              <td>{row.baths}</td>
              <td>{row.sqft}</td>
              <td>{row.rate}</td>
              <td>{row.days}</td>
              <td className="pb-px"><button type="button" aria-label={`Favorite ${row.address}`} className="flex"><Heart size={24} strokeWidth={1.800} className="text-[#606060]" /></button></td>
            </tr>
          );
        })}
      </tbody>
      <tfoot>
        <tr className="h-10 text-[#767676]">
          <td /><td className="whitespace-nowrap">Average for Chicago:</td><td /><td>$250,000</td><td>2</td><td>1</td><td>1,077</td><td>$231</td><td>18 days</td><td />
        </tr>
      </tfoot>
    </table>
  );
}

function ResultsFooter() {
  return (
    <div className="flex flex-col items-center pt-8 pr-[7px] text-sm">
      <p className="bg-[#b9d4f8] leading-[21px] text-[#151515]">Viewing page 1 of 9 <a href="#download" className="text-[#2f7279]">(Download All)</a></p>
      <nav aria-label="Pages" className="mt-10 flex items-center gap-4 pl-12">
        <span aria-current="page" className="flex size-8 items-center justify-center rounded-md bg-[#e8e8e8] font-bold text-[#151515]">1</span>
        {["2", "3", "4", "5", "6", "7", "8"].map((page) => (
          <a key={page} href={`#page-${page}`} className="flex size-8 items-center justify-center text-[#2f7279]">{page}</a>
        ))}
        <a href="#page-9" className="flex h-8 w-4 items-center justify-center text-[#2f7279]">9</a>
        <a href="#next" aria-label="Next page" className="flex h-8 w-10 items-center justify-center"><ChevronRight size={24} strokeWidth={1.800} className="text-[#606060]" /></a>
      </nav>
      <nav aria-label="Breadcrumb" className="mt-10 flex items-center gap-1 pt-px leading-5 text-[#2f7279]">
        <a href="#redfin">Redfin</a>
        <ChevronRight size={24} strokeWidth={2} className="text-[#666]" />
        <a href="#illinois">Illinois</a>
        <ChevronRight size={24} strokeWidth={2} className="text-[#666]" />
        <a href="#chicago">Chicago</a>
      </nav>
    </div>
  );
}

export default function App() {
  return (
    <div className="flex h-screen flex-col overflow-hidden bg-[#faf9f8] font-[Inter,sans-serif]">
      <BrowserBar />
      <SiteHeader />
      <div className="flex min-h-0 flex-1">
        <main className="flex min-w-0 flex-1 flex-col overflow-hidden">
          <div className="border-b border-[#d9d9d9] px-[17px] pt-3 pb-6">
            <Filters />
            <div className="mt-[23px] flex h-6 items-center text-sm font-bold text-black">
              <h1 className="text-lg leading-6">Chicago, IL homes for sale &amp; real estate</h1>
              <span className="ml-auto pt-0.5">421 homes</span>
              <label className="mr-[14px] ml-4 flex items-center gap-[3px] pt-0.5">
                Sort:
                <select className="appearance-none bg-transparent font-bold text-[#2f7279] outline-none"><option>Recommended</option></select>
                <svg className="ml-1 h-[6px] w-[10px]" viewBox="0 0 10 6" aria-hidden="true"><path d="M0 0h10L5 6z" fill="#2f7279" /></svg>
              </label>
            </div>
          </div>
          <div className="min-h-0 flex-1 overflow-hidden">
            <div className="-mt-[21px]">
              <ListingTable />
              <ResultsFooter />
            </div>
          </div>
        </main>
        <MapPane />
      </div>
    </div>
  );
}
